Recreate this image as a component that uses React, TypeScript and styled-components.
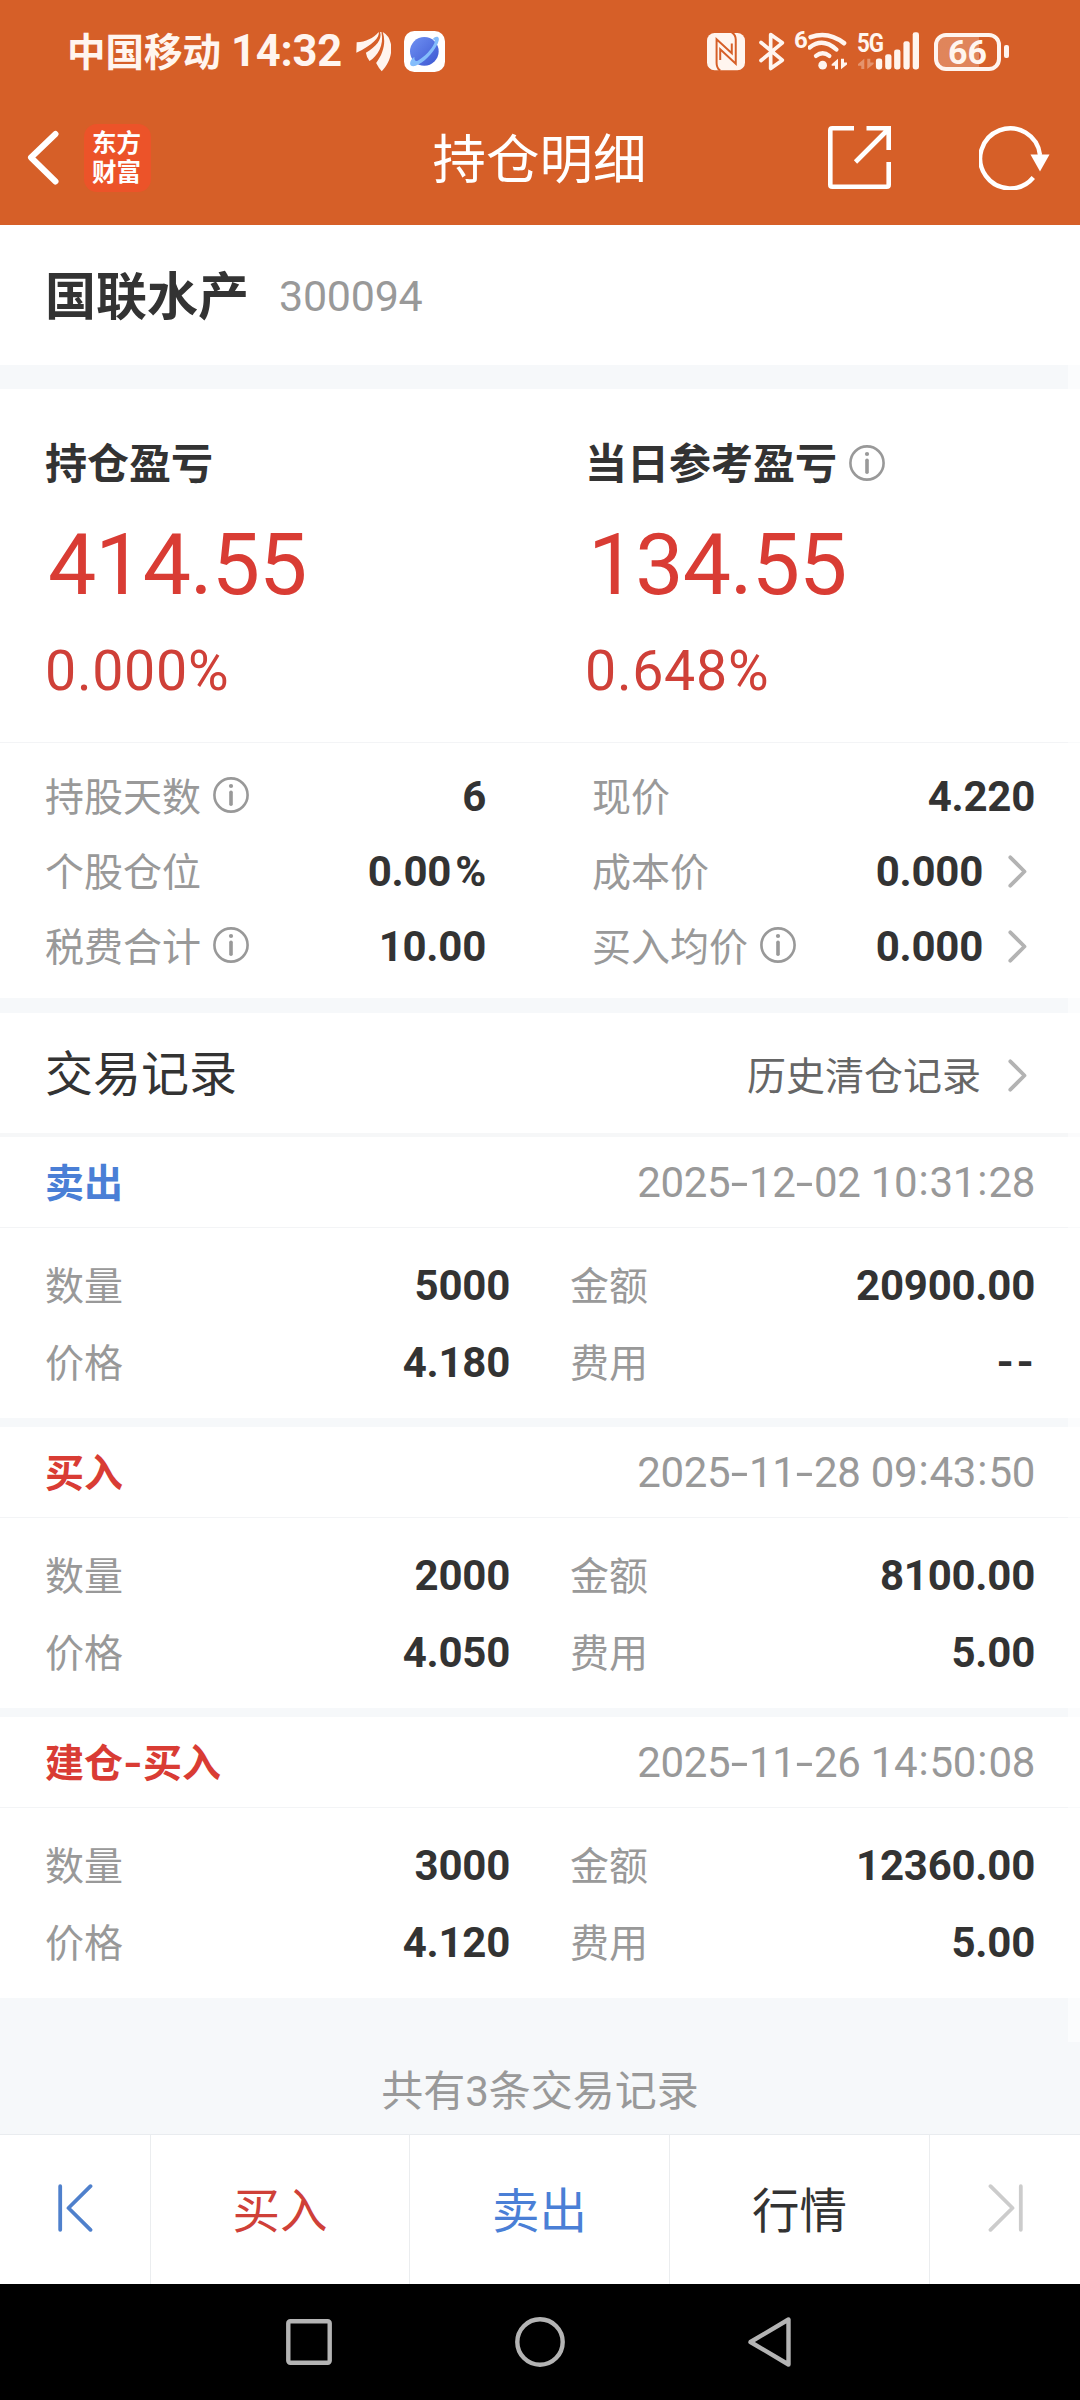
import React from "react";
import styled, { createGlobalStyle } from "styled-components";

const RED = "#d93c34";
const BLUE = "#4a7fd6";
const INK = "#333333";
const MUTED = "#999999";
const BAND = "#f6f8fa";

const GlobalStyle = createGlobalStyle`
  * { box-sizing: border-box; }
  body {
    margin: 0;
    background: #fff;
    font-family: Roboto, "Noto Sans CJK SC", sans-serif;
    color: ${INK};
  }
  svg { display: block; flex: none; }
`;

const Screen = styled.div`
  position: relative;
  display: flex;
  flex-direction: column;
  width: 1080px;
  height: 2400px;
  overflow: hidden;
  background: #fff;
  white-space: nowrap;
`;

const ScrollTrack = styled.div`
  position: absolute;
  top: 365px;
  right: 0;
  width: 12px;
  height: 1677px;
  background: rgba(255, 255, 255, 0.5);
`;

/* ---------- top ---------- */

const StatusBar = styled.div`
  display: flex;
  align-items: center;
  justify-content: space-between;
  height: 103px;
  padding: 0 71px 0 67px;
  background: #d65f28;
  color: #fff5ef;
`;

const StatusGroup = styled.div`
  display: flex;
  align-items: center;
`;

const Carrier = styled.span`
  padding-top: 2px;
  font-size: 38.5px;
  line-height: 50px;
  font-weight: 700;
`;

const Clock = styled.span`
  margin: 0 14px 0 10px;
  font-size: 43.5px;
  line-height: 50px;
  font-weight: 700;
  letter-spacing: -0.2px;
`;

const PlanetTile = styled.div`
  margin-left: 13px;
`;

const BluetoothBox = styled.div`
  margin-left: 14px;
`;

const WifiBox = styled.div`
  position: relative;
  margin-left: 23px;
`;

const WifiGeneration = styled.span`
  position: absolute;
  left: -14px;
  top: -3px;
  font-size: 24px;
  line-height: 23px;
  font-weight: 700;
`;

const SignalBox = styled.div`
  position: relative;
  margin-left: 11px;
`;

const NetworkType = styled.span`
  position: absolute;
  left: -1px;
  top: -2px;
  font-size: 26px;
  line-height: 26px;
  font-weight: 700;
  letter-spacing: -1.2px;
  transform: scaleX(0.86);
  transform-origin: left;
`;

const Battery = styled.div`
  display: flex;
  align-items: center;
  gap: 3px;
  margin-left: 15px;
`;

const BatteryBody = styled.div`
  width: 67px;
  height: 38px;
  border: 4px solid #fff5ef;
  border-radius: 12px;
  background: linear-gradient(90deg, rgba(255, 255, 255, 0.24) 41px, transparent 41px);
  font-size: 34px;
  line-height: 30px;
  font-weight: 700;
  text-align: center;
`;

const BatteryTip = styled.div`
  width: 5px;
  height: 13px;
  border-radius: 2px;
  background: #fff5ef;
`;

const Header = styled.header`
  display: grid;
  grid-template-columns: 1fr auto 1fr;
  align-items: center;
  height: 122px;
  padding: 0 30px 13px 27px;
  background: #d65f28;
  color: #fff;
`;

const HeaderLeft = styled.div`
  display: flex;
  align-items: center;
  gap: 25px;
`;

const HeaderRight = styled.div`
  display: flex;
  align-items: center;
  justify-content: flex-end;
  gap: 88px;
`;

const AppLogo = styled.div`
  display: grid;
  grid-template-columns: auto;
  align-content: center;
  justify-content: center;
  width: 67px;
  height: 68px;
  padding-right: 2px;
  border-radius: 13px;
  background: #ec5329;
  font-size: 24.5px;
  line-height: 29px;
  font-weight: 700;
`;

const Title = styled.h1`
  margin: 0;
  padding: 7px 0 0 2px;
  font-size: 53.5px;
  line-height: 64px;
  font-weight: 400;
`;

/* ---------- stock ---------- */

const StockRow = styled.section`
  display: flex;
  align-items: center;
  gap: 30px;
  height: 140px;
  padding: 2px 45px 0;
`;

const StockName = styled.h2`
  margin: 0;
  padding-top: 3px;
  font-size: 51px;
  line-height: 64px;
  font-weight: 700;
`;

const StockCode = styled.span`
  font-size: 43px;
  line-height: 64px;
  letter-spacing: -0.25px;
  color: ${MUTED};
`;

const Divider = styled.div<{ $size: number; $color?: string }>`
  flex: none;
  height: ${(p) => p.$size}px;
  background: ${(p) => p.$color ?? BAND};
`;

const ProfitPanel = styled.section`
  display: grid;
  grid-template-columns: 1fr 1fr;
  height: 354px;
  padding-top: 44px;
  border-bottom: 1px solid #f3f4f6;
`;

const ProfitColumn = styled.div`
  padding-left: 45px;
`;

const ProfitLabel = styled.div`
  display: flex;
  align-items: center;
  gap: 12px;
  font-size: 42px;
  line-height: 64px;
  font-weight: 700;
`;

const ProfitAmount = styled.div`
  margin-top: 18px;
  padding-left: 3px;
  font-size: 86px;
  line-height: 100px;
  letter-spacing: -1px;
  color: ${RED};
`;

const ProfitRate = styled.div`
  margin-top: 25px;
  font-size: 55.5px;
  line-height: 64px;
  letter-spacing: 0.7px;
  color: #cf4038;
`;

const StatsPanel = styled.section`
  display: grid;
  grid-template-columns: 1fr 1fr;
  height: 255px;
  padding-top: 16px;
`;

const StatsColumn = styled.div<{ $left: number; $right: number }>`
  padding: 0 ${(p) => p.$right}px 0 ${(p) => p.$left}px;
`;

const StatRow = styled.div<{ $height: number }>`
  display: flex;
  align-items: center;
  justify-content: space-between;
  height: ${(p) => p.$height}px;
`;

const FieldLabel = styled.span`
  display: flex;
  align-items: center;
  gap: 12px;
  padding-top: 2px;
  font-size: 39px;
  line-height: 60px;
  color: ${MUTED};
`;

const InfoMark = styled.span`
  margin-top: -5px;
`;

const FieldValue = styled.span`
  display: flex;
  align-items: center;
  gap: 25px;
  font-size: 42px;
  line-height: 60px;
  font-weight: 700;
  letter-spacing: -0.25px;
`;

const ChevronSlot = styled.span`
  padding-right: 8px;
`;

/* ---------- records ---------- */

const RecordsHeader = styled.section`
  display: flex;
  align-items: center;
  justify-content: space-between;
  height: 120px;
  padding: 0 45px;
`;

const RecordsTitle = styled.h2`
  margin: 0;
  padding-top: 4px;
  font-size: 48px;
  line-height: 64px;
  font-weight: 400;
`;

const HistoryLink = styled.a`
  display: flex;
  align-items: center;
  gap: 27px;
  padding-top: 7px;
  font-size: 39px;
  line-height: 60px;
  color: #666;
`;

const HistoryChevron = styled.span`
  margin-top: -3px;
  padding-right: 8px;
`;

const RecordCard = styled.article`
  height: 281px;
`;

const RecordHead = styled.div`
  display: flex;
  align-items: center;
  justify-content: space-between;
  height: 91px;
  padding: 0 45px;
  border-bottom: 1px solid #f3f4f6;
`;

const RecordSide = styled.span<{ $color: string }>`
  padding-top: 4px;
  font-size: 39px;
  line-height: 60px;
  font-weight: 700;
  color: ${(p) => p.$color};
`;

const RecordTime = styled.time`
  padding-top: 2px;
  font-size: 42px;
  line-height: 60px;
  letter-spacing: -0.35px;
  color: ${MUTED};
`;

const Dash = styled.span<{ $width: number; $stretch: number }>`
  display: inline-block;
  width: ${(p) => p.$width}px;
  text-align: center;
  transform: scaleX(${(p) => p.$stretch});
`;

const Colon = styled.span`
  display: inline-block;
  width: 12.4px;
  text-align: center;
  transform: translateY(-2px);
`;

const Percent = styled.span`
  margin-left: 4px;
`;

const RecordBody = styled.div`
  display: grid;
  grid-template-columns: 465px 465px;
  column-gap: 60px;
  padding: 19px 45px 0;
`;

const Summary = styled.div`
  display: flex;
  align-items: center;
  justify-content: center;
  height: 136px;
  padding-top: 51px;
  background: ${BAND};
  font-size: 42px;
  line-height: 60px;
  color: ${MUTED};
`;

/* ---------- bottom ---------- */

const ActionBar = styled.nav`
  display: grid;
  grid-template-columns: 151px 259px 260px 260px 150px;
  height: 150px;
  border-top: 1px solid #e9ecef;
`;

const Action = styled.div<{ $color?: string }>`
  display: flex;
  align-items: center;
  justify-content: center;
  padding-top: 5px;
  border-right: 1px solid #ebedef;
  font-size: 47.5px;
  line-height: 60px;
  color: ${(p) => p.$color ?? INK};
  &:last-child {
    border-right: 0;
  }
`;

const StepIcon = styled.div`
  margin-top: -9px;
`;

const SystemNav = styled.div`
  display: flex;
  align-items: center;
  gap: 183px;
  height: 116px;
  padding-left: 286px;
  background: #000;
`;

/* ---------- icons ---------- */

const InfoIcon = () => (
  <InfoMark>
    <svg width="36" height="36" viewBox="0 0 36 36" fill="none" stroke="#999" strokeWidth="2.6">
      <circle cx="18" cy="18" r="16.6" />
      <circle cx="18" cy="9" r="2.1" fill="#999" stroke="none" />
      <path d="M18 15.3v12" strokeWidth="3.6" strokeLinecap="round" />
    </svg>
  </InfoMark>
);

const Chevron = () => (
  <svg width="19" height="33" viewBox="0 0 19 33" fill="none" stroke="#b3b3b3" strokeWidth="3.8" strokeLinecap="round" strokeLinejoin="round">
    <path d="M2.3 2.3 16.5 16.5 2.3 30.7" />
  </svg>
);

const WingsIcon = () => (
  <svg width="35" height="41" viewBox="48 34 106 122" fill="#fff5ef">
    <path d="M50 67C78 66 100 55 117 36C120 52 98 76 49 99Z" />
    <path d="M121 36C128 59 108 80 78 99Q80 114 89 124C113 109 134 77 125 36Z" />
    <path d="M129 36C139 66 132 100 109 130Q117 146 126 155C149 133 160 96 153 69Q148 47 129 36Z" />
  </svg>
);

const PlanetIcon = () => (
  <svg width="41" height="41" viewBox="0 0 123 123">
    <defs>
      <linearGradient id="globe" x1="0" y1="0" x2="1" y2="1">
        <stop offset="0" stopColor="#7091f2" />
        <stop offset="1" stopColor="#3b57d2" />
      </linearGradient>
    </defs>
    <rect width="123" height="123" rx="31" fill="#fff" />
    <circle cx="61" cy="61" r="43" fill="url(#globe)" />
    <path d="M90 20C103 13 109 21 101 38C85 70 59 94 35 104C20 109 14 100 22 86L31 77C31 88 34 92 41 89C63 77 83 55 91 37C94 29 92 25 86 25Z" fill="#84bdfb" />
  </svg>
);

const NfcIcon = () => (
  <svg width="38" height="39" viewBox="22 36 115 116">
    <rect x="22" y="38" width="115" height="113" rx="23" fill="#fff5ef" />
    <g fill="none" stroke="#d65f28" strokeWidth="6" strokeLinejoin="miter">
      <path d="M62 152Q51 144 51 128V57L97 99V70" />
      <path d="M97 36Q109 44 109 58V131L62 87V120" />
    </g>
  </svg>
);

const BluetoothIcon = () => (
  <svg width="26" height="39" viewBox="174 36 78 116" fill="none" stroke="#fff5ef" strokeWidth="11" strokeLinejoin="round" strokeLinecap="round">
    <path d="M180 67 244 120 209 145V43L244 68 180 121" />
  </svg>
);

const WifiIcon = () => (
  <svg width="39" height="39" viewBox="322 36 117 116" fill="none" stroke="#fff5ef">
    <path d="M330 51Q382 32 430 69" strokeWidth="14" strokeLinecap="round" />
    <path d="M327 82Q366 51 407 88" strokeWidth="13" strokeLinecap="round" />
    <path d="M346 107Q366 91 386 107" strokeWidth="13" strokeLinecap="round" />
    <circle cx="366" cy="135" r="13" fill="#fff5ef" stroke="none" />
    <path d="M412 147V116L393 132V137H403V147ZM421 116V147L440 132V127H430V116Z" fill="#fff5ef" stroke="none" />
  </svg>
);

const SignalIcon = () => (
  <svg width="61" height="39" viewBox="472 36 184 116" fill="#fff5ef">
    <path d="M491 147V116L472 132V137H482V147ZM500 116V147L519 132V127H509V116Z" opacity="0.35" />
    <rect x="526" y="115" width="19" height="33" rx="7" />
    <rect x="554" y="102" width="19" height="46" rx="7" />
    <rect x="581" y="88" width="19" height="60" rx="7" />
    <rect x="609" y="63" width="19" height="85" rx="7" />
    <rect x="637" y="36" width="19" height="112" rx="7" />
  </svg>
);

const BackIcon = () => (
  <svg width="32" height="55" viewBox="0 0 32 55" fill="none" stroke="#fff" strokeWidth="6" strokeLinecap="round" strokeLinejoin="round">
    <path d="M28.5 4 4 27.5 28.5 51.5" />
  </svg>
);

const ShareIcon = () => (
  <svg width="63" height="63" viewBox="0 0 63 63" fill="none" stroke="#fff" strokeWidth="4.6">
    <path d="M26 2.3H4.3Q2.3 2.3 2.3 4.3V58.7Q2.3 60.7 4.3 60.7H58.7Q60.7 60.7 60.7 58.7V36" />
    <path d="M38.5 2.3H60.7V24M59.5 4 27.5 36" />
  </svg>
);

const RefreshIcon = () => (
  <svg width="71" height="65" viewBox="0 0 71 65" fill="none">
    <path d="M54.3 52.5A30 30 0 1 1 61 30" stroke="#fff" strokeWidth="4.4" />
    <path d="M51.5 29.5H70.5L61 46.5Z" fill="#fff" />
  </svg>
);

const FirstIcon = () => (
  <svg width="35" height="48" viewBox="0 0 35 48" fill="none" stroke="#4f80cc" strokeWidth="3.8" strokeLinecap="round" strokeLinejoin="round">
    <path d="M2.2 2.2V45.8M32.5 2.2 10.5 24 32.5 45.8" />
  </svg>
);

const LastIcon = () => (
  <svg width="35" height="48" viewBox="0 0 35 48" fill="none" stroke="#ccc" strokeWidth="3.8" strokeLinecap="round" strokeLinejoin="round">
    <path d="M32.8 2.2V45.8M2.5 2.2 24.5 24 2.5 45.8" />
  </svg>
);

/* ---------- data ---------- */

type Stat = { label: string; value: string; info?: boolean; link?: boolean };

const leftStats: Stat[] = [
  { label: "持股天数", value: "6", info: true },
  { label: "个股仓位", value: "0.00%" },
  { label: "税费合计", value: "10.00", info: true },
];

const rightStats: Stat[] = [
  { label: "现价", value: "4.220" },
  { label: "成本价", value: "0.000", link: true },
  { label: "买入均价", value: "0.000", info: true, link: true },
];

const records = [
  { side: "卖出", color: BLUE, time: "2025-12-02 10:31:28", qty: "5000", price: "4.180", amount: "20900.00", fee: "--" },
  { side: "买入", color: RED, time: "2025-11-28 09:43:50", qty: "2000", price: "4.050", amount: "8100.00", fee: "5.00" },
  { side: "建仓-买入", color: RED, time: "2025-11-26 14:50:08", qty: "3000", price: "4.120", amount: "12360.00", fee: "5.00" },
];

const spaced = (text: string, dashWidth: number, stretch: number) =>
  text.split("").map((ch, i) => {
    if (ch === "-") return <Dash key={i} $width={dashWidth} $stretch={stretch}>-</Dash>;
    if (ch === ":") return <Colon key={i}>:</Colon>;
    if (ch === "%") return <Percent key={i}>%</Percent>;
    return <React.Fragment key={i}>{ch}</React.Fragment>;
  });

const Field = ({ label, value, info, link, height }: Stat & { height: number }) => (
  <StatRow $height={height}>
    <FieldLabel>
      {label}
      {info && <InfoIcon />}
    </FieldLabel>
    <FieldValue>
      <span>{spaced(value, 20, 1.05)}</span>
      {link && <ChevronSlot><Chevron /></ChevronSlot>}
    </FieldValue>
  </StatRow>
);

export default function App() {
  return (
    <Screen>
      <GlobalStyle />
      <StatusBar>
        <StatusGroup>
          <Carrier>中国移动</Carrier>
          <Clock>14:32</Clock>
          <WingsIcon />
          <PlanetTile><PlanetIcon /></PlanetTile>
        </StatusGroup>
        <StatusGroup>
          <NfcIcon />
          <BluetoothBox><BluetoothIcon /></BluetoothBox>
          <WifiBox>
            <WifiGeneration>6</WifiGeneration>
            <WifiIcon />
          </WifiBox>
          <SignalBox>
            <NetworkType>5G</NetworkType>
            <SignalIcon />
          </SignalBox>
          <Battery>
            <BatteryBody>66</BatteryBody>
            <BatteryTip />
          </Battery>
        </StatusGroup>
      </StatusBar>

      <Header>
        <HeaderLeft>
          <BackIcon />
          <AppLogo>
            <span>东方</span>
            <span>财富</span>
          </AppLogo>
        </HeaderLeft>
        <Title>持仓明细</Title>
        <HeaderRight>
          <ShareIcon />
          <RefreshIcon />
        </HeaderRight>
      </Header>

      <StockRow>
        <StockName>国联水产</StockName>
        <StockCode>300094</StockCode>
      </StockRow>
      <Divider $size={24} />

      <ProfitPanel>
        <ProfitColumn>
          <ProfitLabel>持仓盈亏</ProfitLabel>
          <ProfitAmount>414.55</ProfitAmount>
          <ProfitRate>0.000%</ProfitRate>
        </ProfitColumn>
        <ProfitColumn>
          <ProfitLabel>当日参考盈亏<InfoIcon /></ProfitLabel>
          <ProfitAmount>134.55</ProfitAmount>
          <ProfitRate>0.648%</ProfitRate>
        </ProfitColumn>
      </ProfitPanel>

      <StatsPanel>
        <StatsColumn $left={45} $right={54}>
          {leftStats.map((s) => <Field key={s.label} {...s} height={75} />)}
        </StatsColumn>
        <StatsColumn $left={52} $right={45}>
          {rightStats.map((s) => <Field key={s.label} {...s} height={75} />)}
        </StatsColumn>
      </StatsPanel>
      <Divider $size={15} />

      <RecordsHeader>
        <RecordsTitle>交易记录</RecordsTitle>
        <HistoryLink>
          历史清仓记录
          <HistoryChevron><Chevron /></HistoryChevron>
        </HistoryLink>
      </RecordsHeader>
      <Divider $size={4} $color="#f6f7f8" />

      {records.map((r, i) => (
        <React.Fragment key={r.time}>
          {i > 0 && <Divider $size={9} />}
          <RecordCard>
            <RecordHead>
              <RecordSide $color={r.color}>{spaced(r.side, 20, 1.3)}</RecordSide>
              <RecordTime>{spaced(r.time, 18.6, 1.5)}</RecordTime>
            </RecordHead>
            <RecordBody>
              <Field label="数量" value={r.qty} height={77} />
              <Field label="金额" value={r.amount} height={77} />
              <Field label="价格" value={r.price} height={77} />
              <Field label="费用" value={r.fee} height={77} />
            </RecordBody>
          </RecordCard>
        </React.Fragment>
      ))}

      <Summary>共有3条交易记录</Summary>

      <ActionBar>
        <Action><StepIcon><FirstIcon /></StepIcon></Action>
        <Action $color="#cf4038">买入</Action>
        <Action $color={BLUE}>卖出</Action>
        <Action>行情</Action>
        <Action><StepIcon><LastIcon /></StepIcon></Action>
      </ActionBar>

      <SystemNav>
        <svg width="46" height="46" viewBox="0 0 46 46" fill="none" stroke="#b4b4b4" strokeWidth="4.4">
          <rect x="2.3" y="2.3" width="41.4" height="41.4" rx="2" />
        </svg>
        <svg width="50" height="50" viewBox="0 0 50 50" fill="none" stroke="#b4b4b4" strokeWidth="4.4">
          <circle cx="25" cy="25" r="22.7" />
        </svg>
        <svg width="43" height="50" viewBox="0 0 43 50" fill="none" stroke="#b4b4b4" strokeWidth="4.4" strokeLinejoin="round">
          <path d="M2.5 25 40.5 2.5V47.5Z" />
        </svg>
      </SystemNav>
      <ScrollTrack />
    </Screen>
  );
}
